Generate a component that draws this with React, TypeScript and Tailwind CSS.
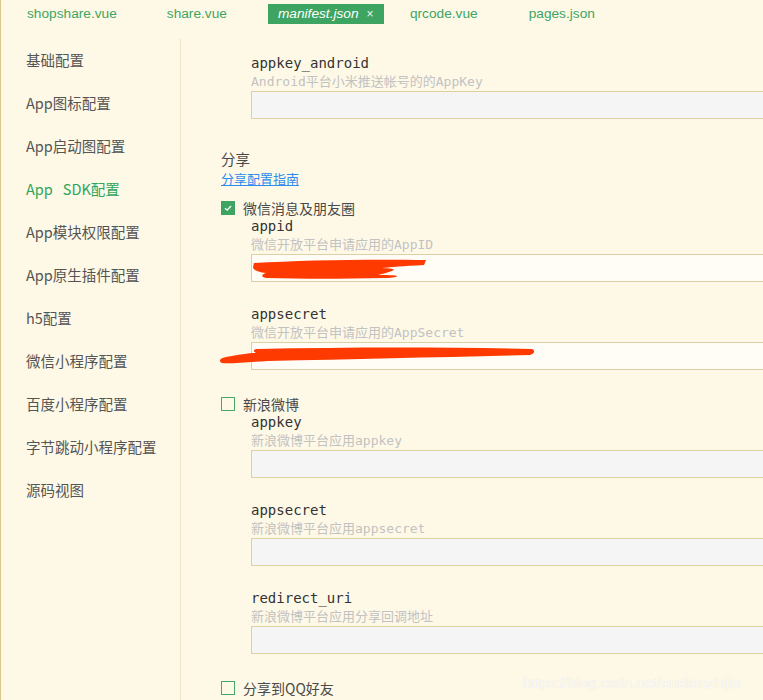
import React from "react";

const mono = { fontFamily: '"DejaVu Sans Mono", "Noto Sans CJK SC", monospace' };

const navItems = [
  "基础配置",
  "App图标配置",
  "App启动图配置",
  "App SDK配置",
  "App模块权限配置",
  "App原生插件配置",
  "h5配置",
  "微信小程序配置",
  "百度小程序配置",
  "字节跳动小程序配置",
  "源码视图",
];

// red redaction marks painted over the filled inputs
function Scribble({ kind }: { kind: "appid" | "secret" }) {
  if (kind === "appid") {
    return (
      <svg className="absolute left-0 top-0 pointer-events-none" width="200" height="30" viewBox="0 0 200 30">
        <path
          d="M2 8 C50 5 120 4 174 5 L172 10 C150 11 140 12 130 13 C150 14 140 16 134 18 L126 20 C160 20 140 23 132 23 C90 24 50 24 14 23 C8 22 10 19 14 18 C6 17 1 15 1 12 Z"
          fill="#ff3a00"
        />
      </svg>
    );
  }
  return (
    <svg className="absolute left-[-34px] top-0 pointer-events-none" width="330" height="30" viewBox="0 0 330 30">
      <path
        d="M40 6 C130 4 230 4 314 6 C318 8 316 11 312 12 C230 14 140 16 50 18 C30 19 12 21 4 20 C0 18 2 15 8 14 C20 12 30 10 38 10 C34 8 36 6 40 6 Z"
        fill="#ff3a00"
      />
    </svg>
  );
}

function Field({
  label,
  desc,
  filled,
  scribble,
  className = "",
}: {
  label: string;
  desc: string;
  filled?: boolean;
  scribble?: "appid" | "secret";
  className?: string;
}) {
  return (
    <div className={`pl-[30px] ${className}`}>
      <div className="h-[18px] text-[14px] leading-[18px] text-[#333]" style={mono}>
        {label}
      </div>
      <div className="mt-[1px] h-[18px] text-[13px] leading-[18px] text-[#c2c2c2] whitespace-nowrap" style={mono}>
        {desc}
      </div>
      <div
        className={`relative h-[28px] border border-r-0 border-[#ddd0a4] ${
          filled ? "bg-[#fffdf6]" : "bg-[#f5f5f5]"
        }`}
      >
        {scribble && <Scribble kind={scribble} />}
      </div>
    </div>
  );
}

function Checkbox({ checked, label, className = "" }: { checked?: boolean; label: string; className?: string }) {
  return (
    <div className={`flex h-[18px] items-center ${className}`}>
      {checked ? (
        <span className="flex h-[14px] w-[14px] items-center justify-center bg-[#3ea461]">
          <svg width="10" height="10" viewBox="0 0 10 10">
            <path d="M2 5.2 L4.2 7.2 L8 3" stroke="#fff" strokeWidth="1.3" fill="none" />
          </svg>
        </span>
      ) : (
        <span className="h-[14px] w-[14px] border-[1.5px] border-[#46a767]" />
      )}
      <span className="ml-[8px] text-[14px] text-[#4a4a4a]">{label}</span>
    </div>
  );
}

export default function App() {
  return (
    <div
      className="relative h-[700px] w-[763px] overflow-hidden border-l border-[#d8c890] bg-[#fef9e7]"
      style={{ fontFamily: '"Noto Sans CJK SC", "Liberation Sans", sans-serif' }}
    >
      {/* Tabs */}
      <div
        className="flex h-[39px] items-start pl-[15px] pt-[4px] text-[13.7px]"
        style={{ fontFamily: '"Liberation Sans", Arial, sans-serif' }}
      >
        <div className="flex h-[20px] items-center px-[11px] text-[#3ea461]">shopshare.vue</div>
        <div className="ml-[28px] flex h-[20px] items-center px-[11px] text-[#3ea461]">share.vue</div>
        <div className="ml-[30px] flex h-[20px] w-[116px] items-center bg-[#3ea461] pl-[10px] text-white">
          <span className="italic">manifest.json</span>
          <span className="ml-[8px] text-[12px] text-white/90">×</span>
        </div>
        <div className="ml-[15px] flex h-[20px] items-center px-[11px] text-[#3ea461]">qrcode.vue</div>
        <div className="ml-[29px] flex h-[20px] items-center px-[11px] text-[#3ea461]">pages.json</div>
      </div>

      <div className="flex">
        {/* Sidebar */}
        <div className="h-[661px] w-[180px] shrink-0 border-r border-[#efe4c6]">
          {navItems.map((item, i) => {
            const [head, ...rest] = item.split(" ");
            return (
              <div
                key={item}
                className={`flex h-[43px] items-center pl-[25px] pb-[2px] text-[14.5px] ${
                  i === 3 ? "text-[#2ea55a]" : "text-[#555]"
                }`}
              >
                <span>{head}</span>
                {rest.length > 0 && <span className="ml-[10px]">{rest.join(" ")}</span>}
              </div>
            );
          })}
        </div>

        {/* Content */}
        <div className="flex-1 pl-[40px] pt-[15px]">
          <Field label="appkey_android" desc="Android平台小米推送帐号的的AppKey" />

          <div className="mt-[30px] h-[20px] text-[14.5px] leading-[20px] text-[#4a4a4a]">分享</div>
          <div className="h-[20px] text-[13px] leading-[20px] text-[#2d8cf0] underline">分享配置指南</div>

          <Checkbox checked label="微信消息及朋友圈" className="mt-[10px]" />
          <Field label="appid" desc="微信开放平台申请应用的AppID" filled scribble="appid" />
          <Field label="appsecret" desc="微信开放平台申请应用的AppSecret" filled scribble="secret" className="mt-[23px]" />

          <Checkbox label="新浪微博" className="mt-[25px]" />
          <Field label="appkey" desc="新浪微博平台应用appkey" />
          <Field label="appsecret" desc="新浪微博平台应用appsecret" className="mt-[23px]" />
          <Field label="redirect_uri" desc="新浪微博平台应用分享回调地址" className="mt-[23px]" />

          <Checkbox label="分享到QQ好友" className="mt-[25px]" />
        </div>
      </div>

      {/* watermark */}
      <div
        className="absolute left-[522px] top-[672px] text-[15px] text-white/85"
        style={{ fontFamily: '"Liberation Sans", Arial, sans-serif', textShadow: "0 0 1px rgba(0,0,0,0.15)" }}
      >
        https://blog.csdn.net/endianzhijia
      </div>
    </div>
  );
}
